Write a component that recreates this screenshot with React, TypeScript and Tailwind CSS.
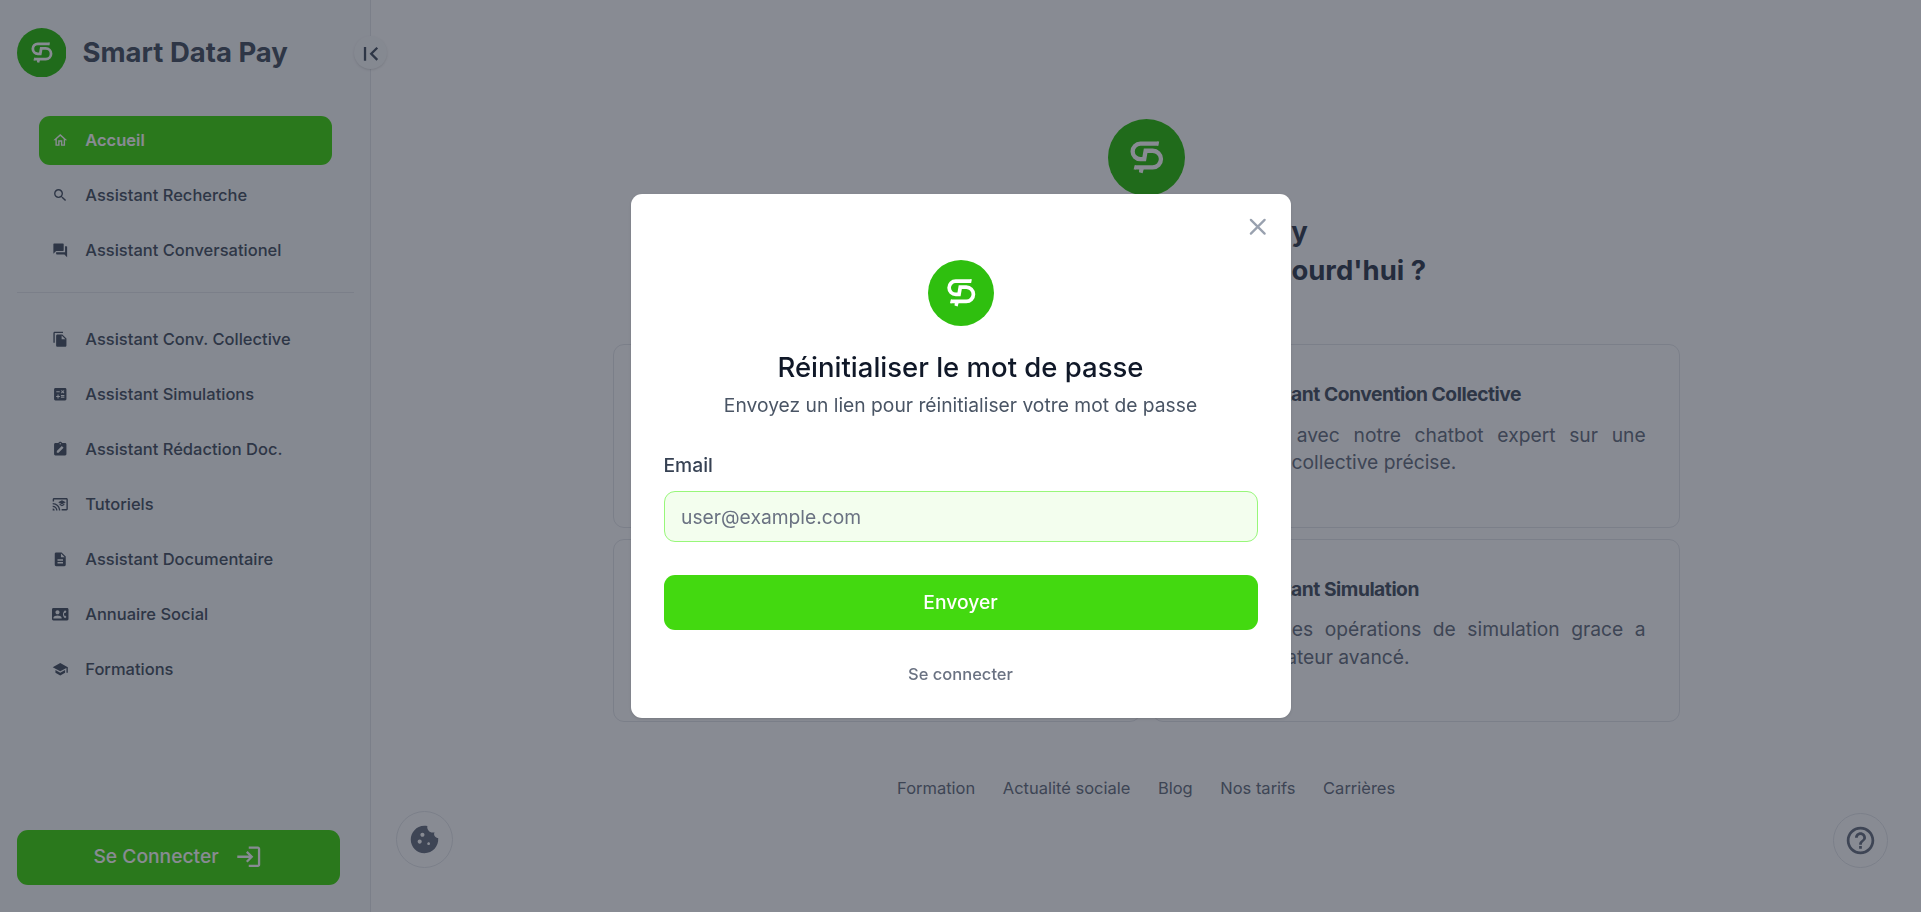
import { useLayoutEffect, type ReactNode } from 'react';
import type { IconType } from 'react-icons';
import {
  MdCalculate,
  MdCastForEducation,
  MdChatBubbleOutline,
  MdContactPhone,
  MdCookie,
  MdDescription,
  MdFileCopy,
  MdFirstPage,
  MdForum,
  MdHelpOutline,
  MdLogin,
  MdOutlineHome,
  MdSchool,
  MdSearch
} from 'react-icons/md';

type NavItem = {
  label: string;
  icon: IconType | (() => ReactNode);
  active?: boolean;
};

const mainNav: NavItem[] = [
  { label: 'Accueil', icon: MdOutlineHome, active: true },
  { label: 'Assistant Recherche', icon: MdSearch },
  { label: 'Assistant Conversationel', icon: MdForum }
];

const toolsNav: NavItem[] = [
  { label: 'Assistant Conv. Collective', icon: MdFileCopy },
  { label: 'Assistant Simulations', icon: MdCalculate },
  { label: 'Assistant Rédaction Doc.', icon: ClipboardEdit },
  { label: 'Tutoriels', icon: MdCastForEducation },
  { label: 'Assistant Documentaire', icon: MdDescription },
  { label: 'Annuaire Social', icon: MdContactPhone },
  { label: 'Formations', icon: MdSchool }
];

const cards = [
  {
    title: 'Assistant Recherche',
    description: 'Effectuez des recherches juridiques et sociales grace a notre moteur.',
    icon: MdSearch
  },
  {
    title: 'Assistant Convention Collective',
    description: 'Conversez avec notre chatbot expert sur une convention collective précise.',
    icon: MdFileCopy
  },
  {
    title: 'Assistant Conversationel',
    description: 'Posez vos questions a notre chatbot expert en droit social.',
    icon: MdChatBubbleOutline
  },
  {
    title: 'Assistant Simulation',
    description: 'Effectuer des opérations de simulation grace a notre simulateur avancé.',
    icon: MdCalculate
  }
];

const footerLinks = ['Formation', 'Actualité sociale', 'Blog', 'Nos tarifs', 'Carrières'];

function Logo({ className }: { className: string }) {
  return (
    <svg viewBox="0 0 100 100" className={className}>
      <circle cx="50" cy="50" r="50" fill="#2fbf0f" />
      <g fill="none" stroke="#fff" strokeWidth="5.6">
        <path d="M65.2 32.1H42a10 10 0 0 0 0 20h5l1.9-10.9H58a10.8 10.8 0 0 1 0 21.6H35" />
      </g>
      <path fill="#fff" d="M64 29.3h2.5l-1.2 5.6H64zM36 60h-1.4l-1.3 5.6H36zM40.6 64.5h5.9L45 70.3l-4.8-1.2z" />
    </svg>
  );
}

function ClipboardEdit() {
  return (
    <svg viewBox="0 0 24 24" width="1em" height="1em" fill="currentColor" fillRule="evenodd">
      <path d="M19 3h-4.18C14.4 1.84 13.3 1 12 1s-2.4.84-2.82 2H5c-1.1 0-2 .9-2 2v14c0 1.1.9 2 2 2h14c1.1 0 2-.9 2-2V5c0-1.1-.9-2-2-2zm-7 0c.55 0 1 .45 1 1s-.45 1-1 1-1-.45-1-1 .45-1 1-1zM7 17.2v-2.5l7.3-7.3 2.5 2.5-7.3 7.3z" />
    </svg>
  );
}

function NavRow({ label, icon: Icon, active }: NavItem) {
  return (
    <a
      href="#"
      className={
        active
          ? 'flex h-9 items-center gap-3 rounded-lg bg-[#43d910] px-2.5 text-xs font-semibold text-white'
          : 'flex h-9 items-center gap-3 rounded-lg px-2.5 text-xs font-medium text-gray-600'
      }
    >
      <Icon />
      {label}
    </a>
  );
}

function Sidebar() {
  return (
    <aside className="relative flex w-[16.875rem] shrink-0 flex-col border-r border-gray-200 bg-gray-50 px-3 py-5">
      <div className="flex items-center gap-3">
        <Logo className="size-9" />
        <span className="text-xl font-bold text-gray-600">Smart Data Pay</span>
      </div>
      <nav className="mt-7 flex flex-col gap-1 px-4">
        {mainNav.map((item) => (
          <NavRow key={item.label} {...item} />
        ))}
      </nav>
      <hr className="mt-3 border-gray-200" />
      <nav className="mt-4 flex flex-col gap-1 px-4">
        {toolsNav.map((item) => (
          <NavRow key={item.label} {...item} />
        ))}
      </nav>
      <button className="mt-auto flex h-10 w-[14.6875rem] items-center justify-center gap-3 rounded-lg bg-[#43d910] text-sm font-medium text-white">
        Se Connecter
        <MdLogin className="size-5" />
      </button>
      <button className="absolute top-[35.75px] -right-[17px] flex size-6 items-center justify-center rounded-full bg-gray-50 text-gray-600 shadow-sm">
        <MdFirstPage className="mt-[3px] size-5 shrink-0" />
      </button>
    </aside>
  );
}

function Home() {
  return (
    <main className="flex flex-1 flex-col items-center bg-white pt-[118.75px]">
      <Logo className="size-14" />
      <h1 className="mt-3 text-center text-xl font-bold text-gray-700">
        Bonjour, Smart Data Pay
        <br />
        Comment puis-je vous aider aujourd'hui ?
      </h1>
      <div className="mt-10 grid w-[48.5rem] grid-cols-2 gap-2">
        {cards.map(({ title, description, icon: Icon }) => (
          <div key={title} className="h-[183.5px] rounded-lg border border-gray-200 p-6">
            <div className="flex items-center gap-3">
              <Icon className="size-6 text-gray-600" />
              <h2 className="text-sm font-bold tracking-tight text-gray-600">{title}</h2>
            </div>
            <p className="mt-[10.5px] text-justify text-sm text-gray-500">{description}</p>
          </div>
        ))}
      </div>
      <footer className="mt-10 flex gap-5 text-xs text-gray-500">
        {footerLinks.map((link) => (
          <a key={link} href="#">
            {link}
          </a>
        ))}
      </footer>
    </main>
  );
}

function ResetPasswordModal() {
  return (
    <div className="fixed inset-0 z-20 flex items-center justify-center bg-[#111827]/50">
      <div className="relative flex w-[30rem] flex-col items-center rounded-lg bg-white px-6 pt-12 pb-6 shadow-sm">
        <button className="absolute top-[15.5px] right-3 flex size-6 items-center justify-center text-gray-400">
          <svg viewBox="0 0 24 24" className="size-5 shrink-0" fill="none" stroke="currentColor" strokeWidth="2" strokeLinecap="round">
            <path d="M6 18 18 6M6 6l12 12" />
          </svg>
        </button>
        <Logo className="size-12" />
        <h2 className="mt-4 text-xl font-medium text-gray-900">Réinitialiser le mot de passe</h2>
        <p className="mt-1 text-sm text-gray-600">Envoyez un lien pour réinitialiser votre mot de passe</p>
        <form className="mt-[32px] flex w-full flex-col">
          <label htmlFor="email" className="text-sm font-medium text-gray-700">
            Email
          </label>
          <input
            id="email"
            type="email"
            placeholder="user@example.com"
            className="mt-[12px] h-[50.5px] rounded-lg border border-[#98f77a] bg-[#f3feee] px-3 text-sm placeholder:text-gray-500"
          />
          <button type="button" className="mt-6 h-10 rounded-lg bg-[#43d910] text-sm font-medium text-white">
            Envoyer
          </button>
        </form>
        <a href="#" className="mt-6 text-xs font-medium text-gray-500">
          Se connecter
        </a>
      </div>
    </div>
  );
}

export default function App() {
  // the whole interface scales from the root font size
  useLayoutEffect(() => {
    document.documentElement.classList.add('text-[22px]');
  }, []);

  return (
    <div className="relative flex h-screen overflow-hidden font-[Inter,sans-serif]">
      <Sidebar />
      <Home />
      <button className="absolute bottom-8 left-[396px] flex size-[57px] items-center justify-center rounded-full border border-gray-200 text-gray-500">
        <MdCookie className="size-6" />
      </button>
      <button className="absolute right-6 bottom-8 flex size-10 items-center justify-center rounded-full border border-gray-200 text-gray-500">
        <MdHelpOutline className="size-6" />
      </button>
      <ResetPasswordModal />
    </div>
  );
}
